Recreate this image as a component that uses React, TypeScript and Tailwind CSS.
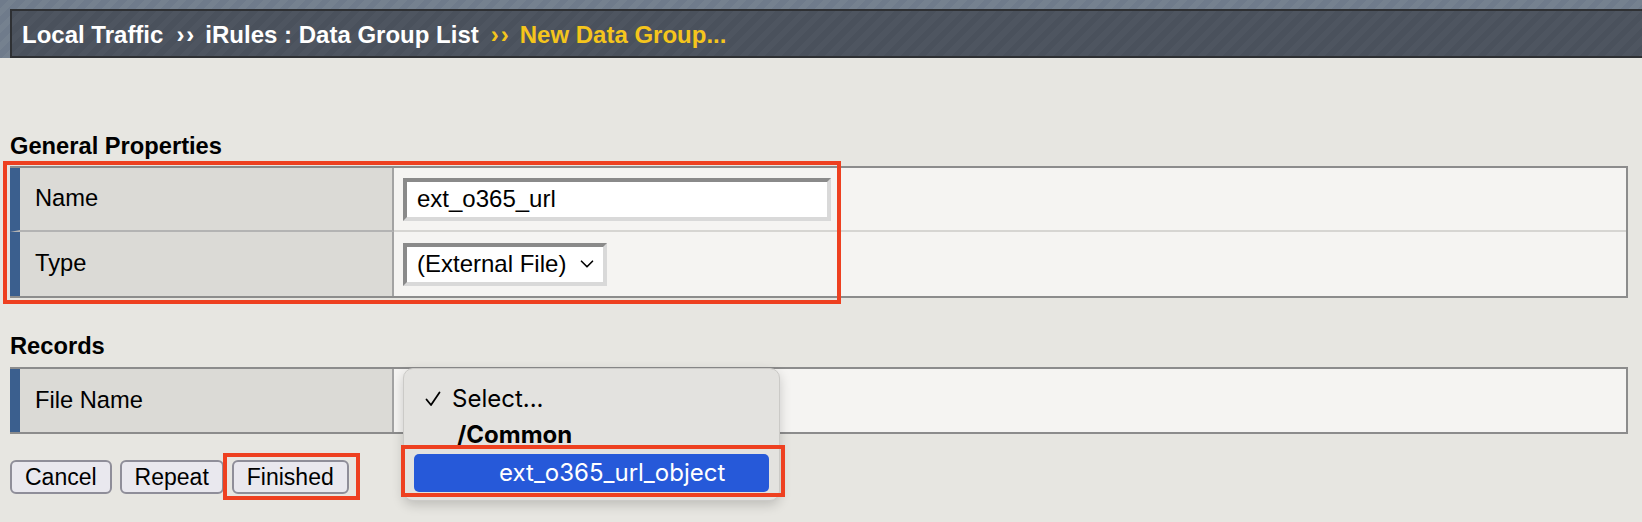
import { ChevronDown } from "lucide-react";

const rows = [
  { label: "Name", kind: "input" },
  { label: "Type", kind: "select" },
];

const Field = ({ children, width }: { children: React.ReactNode; width: string }) => (
  <div
    className={`${width} h-[43px] flex items-center bg-white border-[4px] border-t-[#8a8a8a] border-l-[#8a8a8a] border-b-[#d9d9d9] border-r-[#d9d9d9] pl-[10px] text-[24px] text-black`}
  >
    {children}
  </div>
);

const LabelCell = ({ text, last }: { text: string; last?: boolean }) => (
  <div
    className={`w-[384px] shrink-0 flex items-center bg-[#dbdad6] border-l-[10px] border-l-[#3b5f8e] border-r-2 border-r-[#a3a3a3] pl-[15px] ${
      last ? "" : "border-b-2 border-b-[#b3b3b3]"
    }`}
  >
    {text}
  </div>
);

export default function App() {
  return (
    <div className="w-full min-h-[522px] bg-[#e7e6e1] font-['Liberation_Sans',Arial,sans-serif] text-[23.7px] text-black relative">
      {/* breadcrumb bar */}
      <div className="pl-[10px] pt-[9px] bg-[#6f7b8b] bg-[repeating-linear-gradient(135deg,#6f7b8b_0px,#6f7b8b_6px,#75818f_6px,#75818f_12px)]">
        <div className="h-[49px] flex items-center pl-[10px] pt-[2px] border-2 border-r-0 border-[#2e3033] bg-[#4a515c] bg-[repeating-linear-gradient(135deg,#4a515c_0px,#4a515c_6px,#4e5560_6px,#4e5560_12px)] font-bold text-white text-[24px]">
          <span>Local Traffic</span>
          <span className="ml-[13px] tracking-[2px]">››</span>
          <span className="ml-[9px]">iRules : Data Group List</span>
          <span className="ml-[12px] tracking-[2px] text-[#f5c51c]">››</span>
          <span className="ml-[9px] text-[#f5c51c]">New Data Group...</span>
        </div>
      </div>

      <div className="pl-[10px] pr-[14px]">
        <h2 className="mt-[75px] leading-[26px] font-bold">General Properties</h2>
        <div className="mt-[7px] border-t-2 border-r-2 border-b-2 border-[#8c8c8c] bg-[#f5f4f2]">
          {rows.map((r, i) => (
            <div key={r.label} className="flex h-[64px]">
              <LabelCell text={r.label} last={i === rows.length - 1} />
              <div
                className={`flex-1 flex items-center pl-[9px] ${
                  i === rows.length - 1 ? "" : "border-b-2 border-b-[#d6d5d2]"
                }`}
              >
                {r.kind === "input" ? (
                  <Field width="w-[428px]">ext_o365_url</Field>
                ) : (
                  <Field width="w-[204px]">
                    <span>(External File)</span>
                    <ChevronDown className="ml-[10px] w-[22px] h-[22px]" strokeWidth={1.8} />
                  </Field>
                )}
              </div>
            </div>
          ))}
        </div>

        <h2 className="mt-[35px] leading-[26px] font-bold">Records</h2>
        <div className="mt-[8px] border-t-2 border-r-2 border-b-2 border-[#8c8c8c] bg-[#f5f4f2]">
          <div className="flex h-[63px]">
            <LabelCell text="File Name" last />
            <div className="flex-1" />
          </div>
        </div>

        <div className="mt-[26px] flex gap-[8px] text-[23px]">
          {["Cancel", "Repeat", "Finished"].map((b) => (
            <button
              key={b}
              className="h-[34px] px-[13px] rounded-[6px] border-2 border-[#8f8e99] bg-[#e9e8ee] leading-none"
            >
              {b}
            </button>
          ))}
        </div>
      </div>

      {/* native select popup */}
      <div className="absolute left-[403px] top-[368px] w-[377px] h-[133px] rounded-[10px] bg-[#e3e2df] border border-[#cbcac7] shadow-[0_4px_12px_rgba(0,0,0,0.18)] font-['Inter',sans-serif] text-[24px] px-[10px] pt-[13px]">
        <div className="flex items-center h-[34px]">
          <svg className="ml-[11px] w-[16px] h-[16px]" viewBox="0 0 16 16" fill="none" stroke="black" strokeWidth="1.8" strokeLinecap="round" strokeLinejoin="round">
            <path d="M1.5 8.5 L6 14 L14.5 1.5" />
          </svg>
          <span className="ml-[11px]">Select...</span>
        </div>
        <div className="h-[38px] flex items-center pl-[43px] font-bold">/Common</div>
        <div className="h-[38px] flex items-center rounded-[5px] bg-[#2659d9] text-white pl-[85px]">
          ext_o365_url_object
        </div>
      </div>

      {/* annotation boxes */}
      <div className="absolute left-[3px] top-[161px] w-[838px] h-[143px] border-[4px] border-[#ee4020] pointer-events-none" />
      <div className="absolute left-[223px] top-[453px] w-[137px] h-[47px] border-[4px] border-[#ee4020] pointer-events-none" />
      <div className="absolute left-[401px] top-[445px] w-[384px] h-[52px] border-[4px] border-[#ee4020] pointer-events-none" />
    </div>
  );
}
